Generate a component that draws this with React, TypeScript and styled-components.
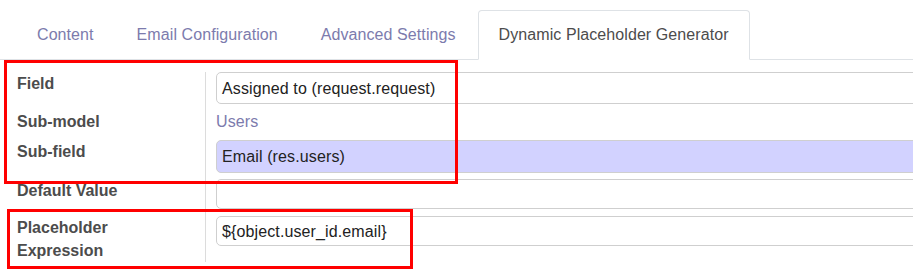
import styled, { createGlobalStyle } from "styled-components";

const GlobalStyle = createGlobalStyle`
    body {
        margin: 0;
        background: #fff;
        font-family: "Liberation Sans", Arial, sans-serif;
        overflow: hidden;
    }
`;

const Page = styled.div`
    position: relative;
    width: 913px;
    height: 273px;
    overflow: hidden;
`;

const TabBar = styled.div`
    display: flex;
    align-items: flex-end;
    height: 59px;
    padding-left: 16px;
    border-bottom: 1px solid #dee2e6;
`;

const Tab = styled.div<{ $active?: boolean }>`
    box-sizing: border-box;
    height: 50px;
    display: flex;
    align-items: center;
    padding: 0 20px;
    margin-right: 1px;
    margin-bottom: -1px;
    font-size: 16px;
    letter-spacing: 0.08px;
    color: ${(p) => (p.$active ? "#4c4c4c" : "#7c7bad")};
    background: ${(p) => (p.$active ? "#fff" : "transparent")};
    border: 1px solid ${(p) => (p.$active ? "#dee2e6" : "transparent")};
    border-bottom-color: ${(p) => (p.$active ? "#fff" : "transparent")};
    border-radius: 4px 4px 0 0;
`;

const Form = styled.div`
    display: grid;
    grid-template-columns: 206px 1fr;
    margin-top: 12px;
`;

const Label = styled.div<{ $top: number }>`
    padding: ${(p) => p.$top}px 0 0 17px;
    border-right: 1px solid #dcdcdc;
    font-size: 16px;
    font-weight: bold;
    line-height: 23px;
    color: #4c4c4c;
`;

const Value = styled.div<{ $top: number }>`
    padding: ${(p) => p.$top}px 0 0 10px;
`;

const Input = styled.div<{ $height: number; $selected?: boolean }>`
    box-sizing: border-box;
    width: calc(100% + 20px);
    height: ${(p) => p.$height}px;
    display: flex;
    align-items: center;
    padding: 1px 0 0 5px;
    border: 1px solid #cfcfcf;
    border-radius: 5px;
    background: ${(p) => (p.$selected ? "#d2d2ff" : "#fff")};
    font-size: 16px;
    letter-spacing: 0.12px;
    color: #222;
`;

const LinkText = styled.div`
    font-size: 16px;
    line-height: 23px;
    letter-spacing: 0.12px;
    color: #7c7bad;
`;

const Highlight = styled.div<{ $left: number; $top: number; $w: number; $h: number }>`
    position: absolute;
    left: ${(p) => p.$left}px;
    top: ${(p) => p.$top}px;
    width: ${(p) => p.$w}px;
    height: ${(p) => p.$h}px;
    box-sizing: border-box;
    border: 3px solid #ff0000;
    pointer-events: none;
`;

export default function App() {
    return (
        <Page>
            <GlobalStyle />
            <TabBar>
                <Tab>Content</Tab>
                <Tab>Email Configuration</Tab>
                <Tab>Advanced Settings</Tab>
                <Tab $active>Dynamic Placeholder Generator</Tab>
            </TabBar>
            <Form>
                <Label $top={0}>Field</Label>
                <Value $top={0}>
                    <Input $height={32}>Assigned to (request.request)</Input>
                </Value>

                <Label $top={6}>Sub-model</Label>
                <Value $top={6}>
                    <LinkText>Users</LinkText>
                </Value>

                <Label $top={7}>Sub-field</Label>
                <Value $top={7}>
                    <Input $height={33} $selected>Email (res.users)</Input>
                </Value>

                <Label $top={6}>Default Value</Label>
                <Value $top={6}>
                    <Input $height={30} />
                </Value>

                <Label $top={7}>Placeholder<br />Expression</Label>
                <Value $top={7}>
                    <Input $height={30}>{"${object.user_id.email}"}</Input>
                </Value>
            </Form>
            <Highlight $left={4} $top={60} $w={454} $h={124} />
            <Highlight $left={7} $top={209} $w={406} $h={60} />
        </Page>
    );
}
